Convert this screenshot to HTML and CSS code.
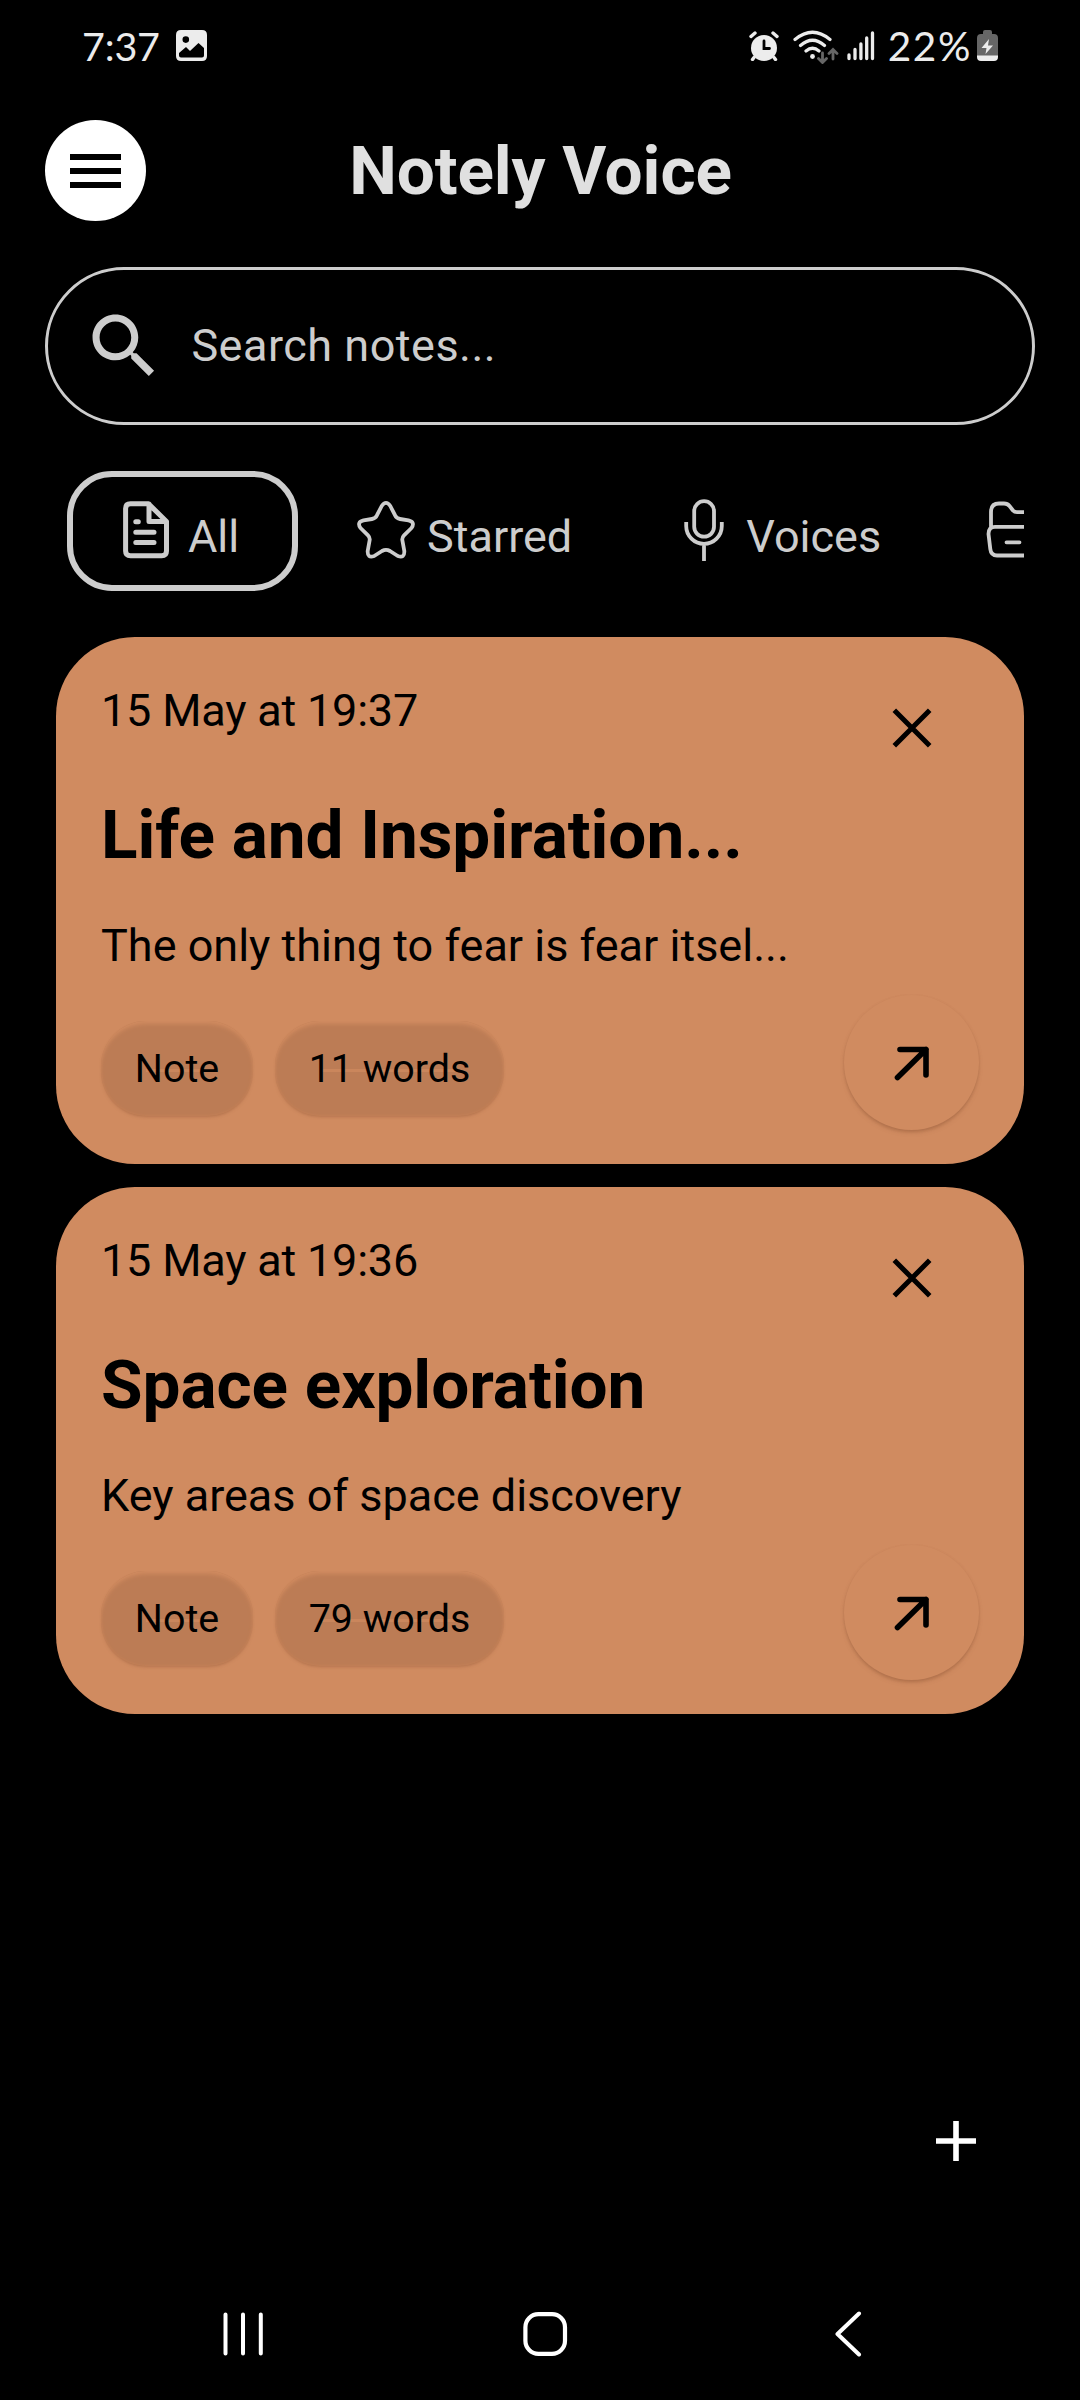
FILE: index.html
```html
<!DOCTYPE html>
<html lang="en">
<head>
<meta charset="utf-8">
<title>Notely Voice</title>
<link rel="stylesheet" href="styles.css">
</head>
<body>
<div class="screen">
  <div class="status">
    <div class="status-left">
      <span>7:37</span>
      <svg width="31" height="31" viewBox="0 0 31 31"><path fill="#ececec" fill-rule="evenodd" d="M5 0H26Q31 0 31 5V26Q31 31 26 31H5Q0 31 0 26V5Q0 0 5 0ZM9.8 6.3A3.3 3.3 0 1 0 9.800 12.900A3.3 3.3 0 1 0 9.8 6.300ZM3 23V25.500Q3 27.500 5 27.500H26Q28 27.500 28 25.500V18L22.500 13L14 21L10 17Z"/></svg>
    </div>
    <div class="status-right">
      <svg class="alarm" width="30" height="30" viewBox="0 0 30 30" stroke="#ececec" stroke-linecap="round" fill="none"><circle cx="15" cy="17" r="13" fill="#ececec" stroke="none"/><path stroke-width="3.400" d="M2 5.500L6 2M28 5.500L24 2M5 26.500L3.500 28.500M25 26.500L26.500 28.500"/><path d="M15 10V17.500H20.500" stroke="#000" stroke-width="2.800"/></svg>
      <svg class="wifi" width="46" height="34" viewBox="0 0 46 34" fill="none" stroke="#ececec" stroke-width="3.200" stroke-linecap="round"><path d="M2 9.500Q19.500-5 37 9.500M7.500 15.500Q19.500 5 31.500 15.500M13 21Q19.500 15.500 26 21"/><circle cx="19.500" cy="26.500" r="2.400" fill="#ececec" stroke="none"/><path stroke="#666" stroke-width="2.800" d="M29.500 23V32M25.500 28.500L29.500 32.500L33.500 28.500M40 29V20M36 23.500L40 19.500L44 23.500"/></svg>
      <svg class="signal" width="28" height="30" viewBox="0 0 28 30" stroke="#ececec" stroke-width="3.300" stroke-linecap="round"><path d="M2 24V27.500M8 18.500V27.500M13.900 13V27.500M19.700 7V27.500M25.500 2V27.500"/></svg>
      <span class="percent">22%</span>
      <svg class="battery" width="21" height="31" viewBox="0 0 21 31"><path fill="#666" d="M6 3V2Q6 0 8 0H13Q15 0 15 2V4H17Q21 4 21 8V26H0V8Q0 4 4 4H6Z"/><path fill="#ececec" d="M0 25.500H21V27Q21 31 17 31H4Q0 31 0 27ZM12 9L4.500 18H9.500L8.500 24L16 15.500H11Z"/></svg>
    </div>
  </div>

  <header class="header">
    <button class="menu"><i></i><i></i><i></i></button>
    <h1>Notely Voice</h1>
  </header>

  <div class="search">
    <svg width="84.400" height="84.400" viewBox="0 0 24 24" fill="#cdcdcd"><path d="M15.500 14h-.79l-.28-.27C15.410 12.590 16 11.110 16 9.500 16 5.910 13.090 3 9.500 3S3 5.910 3 9.500 5.910 16 9.500 16c1.610 0 3.090-.59 4.230-1.570l.27.28v.79l5 4.990L20.490 19l-4.990-5zm-6 0C7.010 14 5 11.990 5 9.500S7.010 5 9.500 5 14 7.010 14 9.500 11.990 14 9.500 14z"/></svg>
    <span>Search notes...</span>
  </div>

  <nav class="filters">
    <div class="filter active">
      <svg width="46" height="58" viewBox="0 0 46 58" fill="none" stroke="#cdcdcd" stroke-width="5" stroke-linecap="round" stroke-linejoin="round"><path d="M7.500 2.800H25.500L43.500 20.500V50Q43.500 54.800 38.700 54.800H7.500Q2.600 54.800 2.600 50V7.600Q2.600 2.800 7.500 2.800ZM26 3V20.500H43M12.800 20.700H15.300M12.800 31.200H31M12.800 41.500H31"/></svg>
      <span>All</span>
    </div>
    <div class="filter starred">
      <svg width="58" height="58" viewBox="0 0 58 58" fill="none" stroke="#cdcdcd" stroke-width="3.800" stroke-linejoin="round"><path d="M24.700 5Q29-1.200 33.300 5L38 14.200Q39.500 17.500 43 18L51.500 19.300Q58.500 21 54.500 27L47 34.300Q44.800 36.500 45.400 39.500L47.300 50Q47.700 57.500 40.800 55L33 50Q29 47.800 25 50L17.200 55Q10.300 57.500 10.700 50L12.600 39.500Q13.200 36.500 11 34.300L3.500 27Q-.5 21 6.500 19.300L15 18Q18.500 17.500 20 14.200Z"/></svg>
      <span>Starred</span>
    </div>
    <div class="filter voices">
      <svg width="40" height="63" viewBox="0 0 40 63" fill="none" stroke="#cdcdcd" stroke-width="3.800"><rect x="10.200" y="2.200" width="19.800" height="35.500" rx="9.900"/><path d="M2.200 23V27A17.800 17.800 0 0 0 37.800 27V23M20 45V62"/></svg>
      <span>Voices</span>
    </div>
    <div class="filter folders">
      <svg width="58" height="58" viewBox="0 0 58 58" fill="none" stroke="#cdcdcd" stroke-width="3.800" stroke-linecap="round" stroke-linejoin="round"><path d="M5 27V11Q5 2.500 13 2.500H18Q21.500 2.500 23.500 5L27 9.500Q28.500 11.200 31 11.200H46Q53 11.200 53 18V27M9 25.800H49Q55.500 25.800 55.500 32L54 48Q53 54.500 47 54.500H11Q5 54.500 4.300 48L2.500 33Q2.500 25.800 9 25.800ZM20.500 41.300H33.500"/></svg>
    </div>
  </nav>

  <main class="notes">
    <article class="note">
      <div class="note-text">
        <p class="date">15 May at 19:37</p>
        <h2>Life and Inspiration...</h2>
        <p class="body">The only thing to fear is fear itsel...</p>
        <div class="tags"><span class="tag">Note</span><span class="tag words">11 words</span></div>
      </div>
      <div class="note-actions">
        <svg width="40" height="40" viewBox="0 0 40 40" stroke="#000" stroke-width="5" fill="none"><path d="M2.300 2.300L37.700 37.700M37.700 2.300L2.300 37.700"/></svg>
        <button class="open"><svg width="36" height="36" viewBox="0 0 36 36" stroke="#000" stroke-width="5.600" stroke-linecap="round" stroke-linejoin="round" fill="none"><path d="M3.500 32.500L32 4.500M6 4.500H32V30"/></svg></button>
      </div>
    </article>
    <article class="note">
      <div class="note-text">
        <p class="date">15 May at 19:36</p>
        <h2>Space exploration</h2>
        <p class="body">Key areas of space discovery</p>
        <div class="tags"><span class="tag">Note</span><span class="tag words">79 words</span></div>
      </div>
      <div class="note-actions">
        <svg width="40" height="40" viewBox="0 0 40 40" stroke="#000" stroke-width="5" fill="none"><path d="M2.300 2.300L37.700 37.700M37.700 2.300L2.300 37.700"/></svg>
        <button class="open"><svg width="36" height="36" viewBox="0 0 36 36" stroke="#000" stroke-width="5.600" stroke-linecap="round" stroke-linejoin="round" fill="none"><path d="M3.500 32.500L32 4.500M6 4.500H32V30"/></svg></button>
      </div>
    </article>
  </main>

  <div class="add">
    <svg width="40" height="40" viewBox="0 0 40 40" stroke="#fff" stroke-width="5.600"><path d="M20 0V40M0 20H40"/></svg>
  </div>

  <footer class="navbar">
    <svg width="46" height="46" viewBox="0 0 46 46" stroke="#fff" stroke-width="4" stroke-linecap="round"><path d="M5.500 3.500V42.500M23 3.500V42.500M40.800 3.500V42.500"/></svg>
    <svg width="46" height="46" viewBox="0 0 46 46" stroke="#fff" stroke-width="4.200" fill="none"><rect x="2.400" y="3.200" width="39.600" height="39.600" rx="13"/></svg>
    <svg width="46" height="46" viewBox="0 0 46 46" stroke="#fff" stroke-width="4" stroke-linecap="round" stroke-linejoin="round" fill="none"><path d="M34 2.500L12.500 23L34 43.500"/></svg>
  </footer>
</div>
</body>
</html>
```
FILE: styles.css
```css
* { box-sizing: border-box; margin: 0; padding: 0; }
body { background: #000; font-family: Roboto, sans-serif; }
svg { display: block; flex: none; }
button { border: 0; font: inherit; }

.screen {
  width: 1080px;
  height: 2400px;
  display: flex;
  flex-direction: column;
  overflow: hidden;
  background: #000;
  color: #cdcdcd;
}

/* System status bar */
.status {
  height: 93px;
  padding: 0 82px 2px 82px;
  display: flex;
  justify-content: space-between;
  align-items: center;
  font-family: Lato, sans-serif;
  font-size: 39.5px;
  line-height: 48px;
  color: #ececec;
}
.status-left, .status-right { display: flex; align-items: center; }
.status-left { gap: 16px; letter-spacing: -0.2px; }
.wifi { margin: 2px 0 0 14px; }
.signal { margin-left: 8px; }
.percent { margin-left: 13px; font-size: 40.5px; letter-spacing: 1.6px; }
.battery { margin-left: 5px; }

/* App header */
.header {
  height: 174px;
  padding: 27px 45px 0;
  display: grid;
  grid-template-columns: 101px 1fr 101px;
  align-items: start;
}
.menu {
  width: 101px;
  height: 101px;
  border-radius: 50%;
  background: #fff;
  display: flex;
  flex-direction: column;
  align-items: center;
  padding-top: 34px;
  gap: 8.300px;
}
.menu i { width: 51px; height: 5.700px; background: #000; flex: none; }
.header h1 {
  text-align: center;
  font-size: 67.5px;
  line-height: 101px;
  font-weight: 700;
  letter-spacing: -0.1px;
  padding-left: 1px;
  color: #e0e0e0;
}

.search {
  height: 158px;
  margin: 0 45px;
  border: 3px solid #cdcdcd;
  border-radius: 79px;
  display: flex;
  align-items: center;
  padding-left: 34px;
  gap: 25px;
  font-size: 45px;
  letter-spacing: 0.5px;
}
.search span { padding-bottom: 2px; }

/* Horizontally scrolling filter chips */
.filters {
  display: flex;
  height: 120px;
  margin: 46px 56px 0;
  padding-left: 11px;
  overflow: hidden;
  font-size: 45px;
}
.filter {
  flex: none;
  display: flex;
  align-items: flex-start;
  padding-top: 30px;
}
.filter span { line-height: 53px; padding-top: 9px; }
.filter.active {
  width: 231px;
  border: 6px solid #cdcdcd;
  border-radius: 45px;
  padding: 24px 0 0 50px;
  gap: 19px;
}
.starred { margin-left: 59px; gap: 12px; }
.voices { margin-left: 112px; padding-top: 28px; gap: 22px; }
.voices span { padding-top: 11px; }
.folders { margin-left: 105px; }

/* Note cards */
.notes {
  margin: 46px 56px 0;
  display: flex;
  flex-direction: column;
  gap: 23px;
  color: #000;
}
.note {
  height: 527px;
  border-radius: 79px;
  background: #d08b60;
  display: flex;
  justify-content: space-between;
  padding: 46px 45px 34px;
}
.note-text { display: flex; flex-direction: column; align-items: flex-start; }
.date, .body { font-size: 45px; line-height: 56px; }
.date { letter-spacing: -0.2px; }
.note h2 { font-size: 67.5px; line-height: 80px; margin-top: 56px; letter-spacing: -0.05px; }
.body { margin-top: 43px; }
.tags { display: flex; gap: 22px; margin-top: 47px; }
.tag {
  height: 95px;
  width: 152px;
  border-radius: 45px;
  display: flex;
  align-items: center;
  justify-content: center;
  font-size: 39.4px;
  background: linear-gradient(#ca865c, #ca865c) center 48px / calc(100% - 90px) 3px no-repeat #bc7c55;
  box-shadow: inset 0 4px 4px -1px #d08b60, inset 0 0 3px #c98459, 0 2px 3px -1px #a0623f88;
}
.words { width: 229px; }
.note-actions {
  width: 135px;
  display: flex;
  flex-direction: column;
  align-items: center;
  justify-content: space-between;
  padding-top: 25px;
}
.open {
  width: 135px;
  height: 135px;
  border-radius: 50%;
  background: #d08b60;
  display: flex;
  align-items: center;
  justify-content: center;
  box-shadow: 0 1px 2px #b0714c99, 0 3px 4px -1px #a46844bb;
}

.add {
  margin-top: auto;
  padding-right: 104px;
  display: flex;
  justify-content: flex-end;
}

/* System navigation bar */
.navbar {
  height: 239px;
  padding: 150px 209px 0 220px;
  display: flex;
  justify-content: space-between;
}
```
